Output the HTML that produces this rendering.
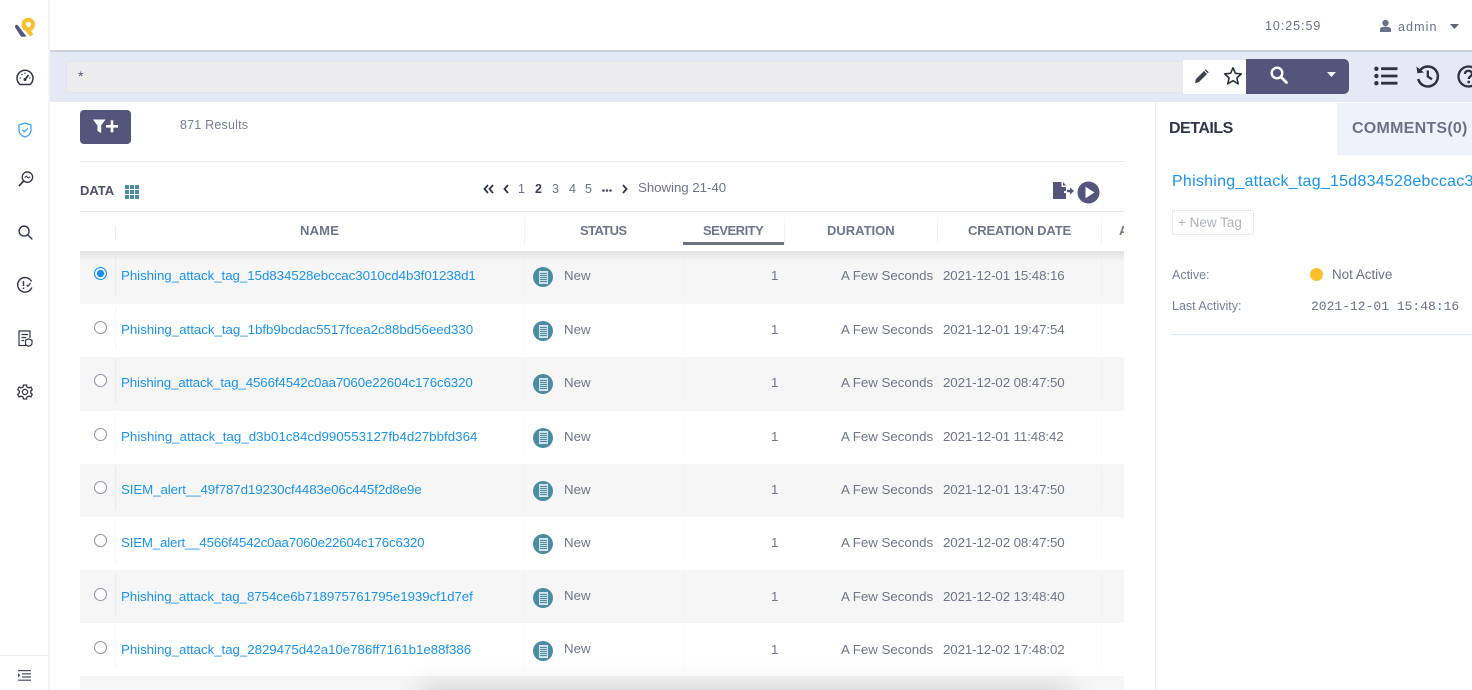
<!DOCTYPE html>
<html lang="en"><head><meta charset="utf-8"><title>Incidents</title>
<style>
html,body{margin:0;padding:0;width:1472px;height:690px;overflow:hidden;background:#fff;font-family:"Liberation Sans",sans-serif;color:#6b7287}
#w{position:relative;width:1472px;height:690px;overflow:hidden;background:#fff;filter:blur(.3px)}
.a{position:absolute}
.t{position:absolute;white-space:nowrap;line-height:16px}
svg{position:absolute;overflow:visible}
.row{position:absolute;left:80px;width:1044px;height:53.2px}
.g{background:#f6f6f7}
.row .t{font-size:13.3px}
.sep{position:absolute;width:1px;top:2px;height:44px;background:rgba(0,0,0,.018)}
.sep.l{background:rgba(0,0,0,.04)}
.rad{position:absolute;left:13.500px;top:16px;width:11px;height:11px;border:1.300px solid #8f93a5;border-radius:50%;background:#fff}
.nm{left:41px;top:17px;color:#1a94f0}
.st{left:484px;top:17px;color:#70768a}
.sv{left:691px;top:17px;color:#70768a}
.du{left:761px;top:17px;color:#70768a;letter-spacing:-.02px}
.da{left:863px;top:17px;color:#70768a;letter-spacing:-.1px}
.ic{position:absolute;left:453px;top:16px;width:20px;height:20px;border-radius:50%;background:#4c8ca3}
.ic:after{content:"";position:absolute;left:5.500px;top:3.500px;width:9px;height:13px;background:repeating-linear-gradient(#c9dde4 0 1px,#4c8ca3 1px 2px);border:.8px solid #d7e6ec;box-sizing:border-box}
.r2 .t,.r2 .rad,.r2 .ic{margin-top:1px}
.r3 .t,.r3 .rad,.r3 .ic{margin-top:2px}
.r3 .st{margin-top:1px}
.th{position:absolute;top:223px;font-size:13px;font-weight:bold;color:#6f768b;line-height:16px;white-space:nowrap}
.pg{position:absolute;top:181px;font-size:12.500px;color:#6b7287;line-height:16px}
</style></head><body><div id="w">

<!-- main areas -->
<div class="a" style="left:50px;top:50px;width:1422px;height:2px;background:#c9cedd"></div>
<div class="a" style="left:50px;top:52px;width:1422px;height:50px;background:#e4e9f5"></div>
<div class="a" style="left:66px;top:61px;width:1117px;height:32px;background:#ececef;border-radius:4px 0 0 4px;box-sizing:border-box;border:1px solid #e3e4ea;border-right:0"></div>
<div class="t" style="left:78px;top:68px;font-size:14px;color:#555a78">*</div>
<div class="a" style="left:1183px;top:60px;width:63px;height:34px;background:#fff"></div>
<div class="a" style="left:1246px;top:59px;width:103px;height:35px;background:#53557a;border-radius:0 5px 5px 0"></div>

<!-- top bar -->
<div class="t" style="left:1265px;top:18px;font-size:12.500px;letter-spacing:.95px;color:#6b7287">10:25:59</div>
<svg style="left:1379px;top:19px" width="13" height="14" viewBox="0 0 13 14"><circle cx="6.500" cy="4" r="3.200" fill="#6b7287"/><path d="M1 13V10.500C1 8.500 3 7.800 6.500 7.800S12 8.500 12 10.500V13Z" fill="#6b7287"/></svg>
<div class="t" style="left:1398px;top:19px;font-size:12.500px;letter-spacing:1.100px;color:#6b7287">admin</div>
<svg style="left:1450px;top:24px" width="9" height="6"><path d="M0 0H9L4.500 5Z" fill="#5f6479"/></svg>

<!-- toolbar icons -->
<svg style="left:1194px;top:69px" width="15" height="15" viewBox="0 0 16 16"><path d="M1 15L2 10.800 10.700 2.100 13.900 5.300 5.200 14Z" fill="#3d4052"/><path d="M11.500 1.300L12.600 .3 15.700 3.400 14.700 4.500Z" fill="#3d4052"/></svg>
<svg style="left:1223px;top:66px" width="20" height="20" viewBox="0 0 20 20"><path d="M10 1.800L12.400 7.300 18.400 7.900 13.900 11.900 15.200 17.800 10 14.700 4.800 17.800 6.100 11.900 1.600 7.900 7.600 7.300Z" fill="none" stroke="#30333f" stroke-width="1.600" stroke-linejoin="round"/></svg>
<svg style="left:1270px;top:66px" width="18" height="18" viewBox="0 0 18 18"><circle cx="7" cy="7" r="5.300" fill="none" stroke="#fff" stroke-width="2.400"/><path d="M11 11L16.500 16.500" stroke="#fff" stroke-width="2.800" stroke-linecap="round"/></svg>
<svg style="left:1327px;top:72px" width="9" height="5"><path d="M0 0H9L4.500 5Z" fill="#fff"/></svg>
<svg style="left:1374px;top:66px" width="24" height="20" viewBox="0 0 24 20" fill="#2f3240"><circle cx="2.400" cy="2.800" r="2.200"/><circle cx="2.400" cy="10" r="2.200"/><circle cx="2.400" cy="17.200" r="2.200"/><rect x="7" y="1.300" width="16.500" height="2.800" rx=".6"/><rect x="7" y="8.600" width="16.500" height="2.800" rx=".6"/><rect x="7" y="15.800" width="16.500" height="2.800" rx=".6"/></svg>
<svg style="left:1415px;top:64px" width="24" height="24" viewBox="0 0 24 24" fill="none" stroke="#2f3240" stroke-width="2.500"><path d="M5 6.300A10 10 0 1 1 3.200 15"/><path d="M1.500 2.500L2.300 9.300 9 8.500Z" fill="#2f3240" stroke="none"/><path d="M12.800 6.500V12.500L17 15.300" stroke-width="2.300"/></svg>
<svg style="left:1457px;top:65px" width="24" height="24" viewBox="0 0 24 24" fill="none" stroke="#2f3240" stroke-width="2.300"><circle cx="11.500" cy="11.500" r="10"/><path d="M8 9C8 6.700 9.800 5.800 11.500 5.800S15 7 15 9C15 11.300 11.700 11.300 11.700 14"/><circle cx="11.700" cy="17" r="1.400" fill="#2f3240" stroke="none"/></svg>

<!-- filter row -->
<div class="a" style="left:80px;top:110px;width:51px;height:34px;background:#53557a;border-radius:4px"></div>
<svg style="left:93px;top:119px" width="26" height="15" viewBox="0 0 26 15" fill="#fff"><path d="M0 .5H12.500L8.200 6.500V14L4.500 12V6.500Z"/><rect x="13" y="6" width="12" height="2.600"/><rect x="17.700" y="1.300" width="2.600" height="12"/></svg>
<div class="t" style="left:180px;top:117px;font-size:12.500px;letter-spacing:.2px;color:#7a8097">871 Results</div>
<div class="a" style="left:80px;top:161px;width:1044px;height:1px;background:#e8e8ea"></div>

<div class="t" style="left:80px;top:183px;font-size:13px;font-weight:bold;color:#4d5068">DATA</div>
<svg style="left:125px;top:185px" width="14" height="14" viewBox="0 0 14 14" fill="#4c8ca3"><rect x="0" y="0" width="4" height="4"/><rect x="5" y="0" width="4" height="4"/><rect x="10" y="0" width="4" height="4"/><rect x="0" y="5" width="4" height="4"/><rect x="5" y="5" width="4" height="4"/><rect x="10" y="5" width="4" height="4"/><rect x="0" y="10" width="4" height="4"/><rect x="5" y="10" width="4" height="4"/><rect x="10" y="10" width="4" height="4"/></svg>

<!-- pagination -->
<svg style="left:483px;top:184px" width="11" height="10" fill="none" stroke="#33364a" stroke-width="1.800"><path d="M5 1L1.500 5 5 9M10 1L6.500 5 10 9"/></svg>
<svg style="left:503px;top:184px" width="6" height="10" fill="none" stroke="#33364a" stroke-width="1.800"><path d="M5 1L1.500 5 5 9"/></svg>
<div class="pg" style="left:518px">1</div>
<div class="pg" style="left:535px;font-weight:bold;color:#3a3d52">2</div>
<div class="pg" style="left:552px">3</div>
<div class="pg" style="left:569px">4</div>
<div class="pg" style="left:585px">5</div>
<svg style="left:602px;top:189px" width="10" height="3" fill="#4a4e63"><circle cx="1.500" cy="1.500" r="1.300"/><circle cx="5" cy="1.500" r="1.300"/><circle cx="8.500" cy="1.500" r="1.300"/></svg>
<svg style="left:622px;top:184px" width="6" height="10" fill="none" stroke="#33364a" stroke-width="1.800"><path d="M1 1L4.500 5 1 9"/></svg>
<div class="t" style="left:638px;top:180px;font-size:13.300px;color:#70768a;letter-spacing:-.05px">Showing 21-40</div>

<svg style="left:1053px;top:182px" width="21" height="18" viewBox="0 0 21 18" fill="#53557a"><path d="M0 0H8.500V5H13V7.500H0ZM10 0L13 3.500H10ZM0 7.500H13V9H0ZM0 9H11V11H0ZM0 11H13V17H0Z"/><path d="M14 7.800H17V5.500L21 9 17 12.500V10.200H14Z"/></svg>
<svg style="left:1077px;top:181px" width="23" height="23" viewBox="0 0 23 23"><circle cx="11.500" cy="11.500" r="11" fill="#53557a"/><path d="M8.500 5.800V17.200L17.500 11.500Z" fill="#fff"/></svg>

<div class="a" style="left:80px;top:211px;width:1044px;height:1px;background:#e6e6e9"></div>

<!-- table header -->
<div class="a" style="left:115px;top:226px;width:1px;height:14px;background:#eeeef0"></div>
<div class="th" style="left:300px;letter-spacing:.2px">NAME</div>
<div class="a" style="left:524px;top:217px;width:1px;height:28px;background:#f3f3f4"></div>
<div class="th" style="left:580px;letter-spacing:-.6px">STATUS</div>
<div class="a" style="left:683px;top:242px;width:101px;height:3px;background:#6b7280"></div>
<div class="th" style="left:703px;letter-spacing:-.5px">SEVERITY</div>
<div class="a" style="left:784px;top:217px;width:1px;height:28px;background:#f3f3f4"></div>
<div class="th" style="left:827px">DURATION</div>
<div class="a" style="left:937px;top:217px;width:1px;height:28px;background:#f3f3f4"></div>
<div class="th" style="left:968px;letter-spacing:-.15px">CREATION DATE</div>
<div class="a" style="left:1101px;top:217px;width:1px;height:28px;background:#f3f3f4"></div>
<div class="a" style="left:1119px;top:223px;width:5px;height:16px;overflow:hidden"><div class="th" style="left:0;top:0">A</div></div>

<!-- rows -->
<div class="row g" style="top:251px"><div class="rad" style="background:#1a8ff0;border-color:#1a8ff0;box-shadow:inset 0 0 0 1.800px #fff"></div><div class="sep l" style="left:35px"></div><div class="t nm" style="letter-spacing:-.045px">Phishing_attack_tag_15d834528ebccac3010cd4b3f01238d1</div><div class="sep" style="left:444px"></div><div class="ic"></div><div class="t st">New</div><div class="sep" style="left:603px"></div><div class="t sv">1</div><div class="t du">A Few Seconds</div><div class="t da">2021-12-01 15:48:16</div><div class="sep" style="left:1021px"></div></div>
<div class="row r2" style="top:304.200px"><div class="rad"></div><div class="sep l" style="left:35px"></div><div class="t nm" style="letter-spacing:-.025px">Phishing_attack_tag_1bfb9bcdac5517fcea2c88bd56eed330</div><div class="sep" style="left:444px"></div><div class="ic"></div><div class="t st">New</div><div class="sep" style="left:603px"></div><div class="t sv">1</div><div class="t du">A Few Seconds</div><div class="t da">2021-12-01 19:47:54</div><div class="sep" style="left:1021px"></div></div>
<div class="row g r2" style="top:357.400px"><div class="rad"></div><div class="sep l" style="left:35px"></div><div class="t nm" style="letter-spacing:-.12px">Phishing_attack_tag_4566f4542c0aa7060e22604c176c6320</div><div class="sep" style="left:444px"></div><div class="ic"></div><div class="t st">New</div><div class="sep" style="left:603px"></div><div class="t sv">1</div><div class="t du">A Few Seconds</div><div class="t da">2021-12-02 08:47:50</div><div class="sep" style="left:1021px"></div></div>
<div class="row r2" style="top:410.600px"><div class="rad"></div><div class="sep l" style="left:35px"></div><div class="t nm" style="letter-spacing:.03px">Phishing_attack_tag_d3b01c84cd990553127fb4d27bbfd364</div><div class="sep" style="left:444px"></div><div class="ic"></div><div class="t st">New</div><div class="sep" style="left:603px"></div><div class="t sv">1</div><div class="t du">A Few Seconds</div><div class="t da">2021-12-01 11:48:42</div><div class="sep" style="left:1021px"></div></div>
<div class="row g r2" style="top:463.800px"><div class="rad"></div><div class="sep l" style="left:35px"></div><div class="t nm" style="letter-spacing:-.09px">SIEM_alert__49f787d19230cf4483e06c445f2d8e9e</div><div class="sep" style="left:444px"></div><div class="ic"></div><div class="t st">New</div><div class="sep" style="left:603px"></div><div class="t sv">1</div><div class="t du">A Few Seconds</div><div class="t da">2021-12-01 13:47:50</div><div class="sep" style="left:1021px"></div></div>
<div class="row r2" style="top:517px"><div class="rad"></div><div class="sep l" style="left:35px"></div><div class="t nm" style="letter-spacing:-.18px">SIEM_alert__4566f4542c0aa7060e22604c176c6320</div><div class="sep" style="left:444px"></div><div class="ic"></div><div class="t st">New</div><div class="sep" style="left:603px"></div><div class="t sv">1</div><div class="t du">A Few Seconds</div><div class="t da">2021-12-02 08:47:50</div><div class="sep" style="left:1021px"></div></div>
<div class="row g r3" style="top:570.200px"><div class="rad"></div><div class="sep l" style="left:35px"></div><div class="t nm" style="letter-spacing:-.06px">Phishing_attack_tag_8754ce6b718975761795e1939cf1d7ef</div><div class="sep" style="left:444px"></div><div class="ic"></div><div class="t st">New</div><div class="sep" style="left:603px"></div><div class="t sv">1</div><div class="t du">A Few Seconds</div><div class="t da">2021-12-02 13:48:40</div><div class="sep" style="left:1021px"></div></div>
<div class="row r3" style="top:623.400px"><div class="rad"></div><div class="sep l" style="left:35px"></div><div class="t nm" style="letter-spacing:-.045px">Phishing_attack_tag_2829475d42a10e786ff7161b1e88f386</div><div class="sep" style="left:444px"></div><div class="ic"></div><div class="t st">New</div><div class="sep" style="left:603px"></div><div class="t sv">1</div><div class="t du">A Few Seconds</div><div class="t da">2021-12-02 17:48:02</div><div class="sep" style="left:1021px"></div></div>
<div class="a g" style="left:80px;top:676px;width:1044px;height:14px"></div>

<!-- header shadow over first row -->
<div class="a" style="left:80px;top:251px;width:1044px;height:11px;background:linear-gradient(#e3e3e6,rgba(246,246,247,0))"></div>
<!-- bottom shadow -->
<div class="a" style="left:425px;top:694px;width:640px;height:14px;box-shadow:0 0 28px 6px rgba(0,0,0,.17)"></div>

<!-- details panel -->
<div class="a" style="left:1124px;top:102px;width:31px;height:588px;background:#fff"></div>
<div class="a" style="left:1155px;top:102px;width:317px;height:588px;background:#fff;border-left:1.500px solid #e9eef9;box-sizing:border-box"></div>
<div class="a" style="left:1337px;top:103px;width:135px;height:52px;background:#eef3fb"></div>
<div class="t" style="left:1169px;top:121px;font-size:16px;font-weight:bold;color:#333648;letter-spacing:-.5px">DETAILS</div>
<div class="t" style="left:1352px;top:121px;font-size:16px;font-weight:bold;color:#6b7287;letter-spacing:.25px">COMMENTS(0)</div>
<div class="a" style="left:1172px;top:155px;width:300px;height:60px;overflow:hidden"><div class="t" style="left:0;top:19px;font-size:16px;color:#1a94f0;letter-spacing:.25px">Phishing_attack_tag_15d834528ebccac3010cd4b3f01238d1</div></div>
<div class="a" style="left:1172px;top:210px;width:82px;height:25px;box-sizing:border-box;border:1px dotted #d5d7dd;border-radius:2px"></div>
<div class="t" style="left:1178px;top:215px;font-size:13.500px;color:#b0b4c0">+ New Tag</div>
<div class="t" style="left:1172px;top:267px;font-size:12.500px;color:#7a8097">Active:</div>
<div class="a" style="left:1310px;top:268px;width:13px;height:13px;border-radius:50%;background:#fbc02d"></div>
<div class="t" style="left:1332px;top:267px;font-size:13.400px;color:#6b7287">Not Active</div>
<div class="t" style="left:1172px;top:298px;font-size:12.500px;color:#7a8097">Last Activity:</div>
<div class="t" style="left:1311px;top:299px;font-size:13px;font-family:'Liberation Mono',monospace;color:#6b7287">2021-12-01 15:48:16</div>
<div class="a" style="left:1172px;top:334px;width:300px;height:1px;background:#dbe6f6"></div>

<!-- sidebar -->
<div class="a" style="left:0;top:0;width:50px;height:690px;background:#fff;border-right:2px solid #f4f4f6;box-sizing:border-box"></div>
<div class="a" style="left:0;top:655px;width:49px;height:1px;background:#eeeef0"></div>
<svg style="left:14px;top:17px" width="22" height="21" viewBox="0 0 22 21"><path d="M1.300 8.500C1.800 7.500 3 7.500 3.800 8.300L12.500 19.500 8.500 19.800C7.800 19.800 7 19.300 6.500 18.700L1.500 11C1 10.300 1 9.300 1.300 8.500Z" fill="#53557a"/><circle cx="14.300" cy="7.600" r="4.800" fill="none" stroke="#fbc02d" stroke-width="4"/><path d="M9.500 8L17.800 18.300" stroke="#fbc02d" stroke-width="4.200"/></svg>
<svg style="left:16px;top:69px" width="18" height="17" viewBox="0 0 18 17" fill="none" stroke="#33364a" stroke-width="1.500"><path d="M4 15.500A8 8 0 1 1 14 15.500Z"/><path d="M9 10.500L12.500 6" stroke-width="1.700"/><circle cx="9" cy="10.500" r="1.500" fill="#33364a" stroke="none"/><path d="M3.500 9H5M13 9H14.500M5.500 5L6.500 6M9 3.500V5" stroke-width="1.100"/></svg>
<svg style="left:18px;top:122px" width="14" height="16" viewBox="0 0 14 16" fill="none" stroke="#3ba0f7" stroke-width="1.250"><path d="M7 1L13 3V8C13 11.500 10.500 14 7 15 3.500 14 1 11.500 1 8V3Z"/><path d="M4.300 7.800L6.300 9.800 9.800 6.300"/></svg>
<svg style="left:18px;top:171px" width="16" height="16" viewBox="0 0 17 17" fill="none" stroke="#33364a" stroke-width="1.400"><circle cx="10" cy="6.500" r="5.500"/><path d="M6 10.500L1 16" stroke-width="1.800"/><path d="M7 7L9 5.500 11 7.500 13 6" stroke-width="1.100"/></svg>
<svg style="left:18px;top:225px" width="15" height="15" viewBox="0 0 16 16" fill="none" stroke="#33364a" stroke-width="1.500"><circle cx="6.500" cy="6.500" r="5.300"/><path d="M10.500 10.500L15.300 15.300"/></svg>
<svg style="left:17px;top:277px" width="16" height="16" viewBox="0 0 16 16" fill="none" stroke="#33364a" stroke-width="1.400"><path d="M14.500 4.500A7.300 7.300 0 1 0 14.800 10.500"/><path d="M6.500 4V9M6.500 10.500V12" stroke-width="1.500"/><path d="M9.700 7.700L11 9.300 13.500 6" stroke-width="1.200"/></svg>
<svg style="left:18px;top:330px" width="15" height="17" viewBox="0 0 15 17" fill="none" stroke="#33364a" stroke-width="1.200"><path d="M8 15.500H1V1H12V8"/><path d="M3.500 4.500H10M3.500 7.500H8M3.500 10.500H6"/><path d="M10.500 9L14 10.200V13C14 14.500 12.500 15.800 10.500 16.300 8.500 15.800 7.500 14.500 7.500 13V10.200Z"/></svg>
<svg style="left:17px;top:384px" width="16" height="16" viewBox="0 0 16 16" fill="none" stroke="#33364a" stroke-width="1.300"><path d="M6.500 1H9.500L10 3 12 3.900 13.900 3 15.200 5.600 13.700 7 13.700 9 15.200 10.400 13.900 13 12 12.100 10 13 9.500 15H6.500L6 13 4 12.100 2.100 13 .8 10.400 2.300 9V7L.8 5.600 2.100 3 4 3.900 6 3Z"/><circle cx="8" cy="8" r="2.600"/></svg>
<svg style="left:18px;top:670px" width="13" height="11" viewBox="0 0 13 11" fill="#4a4d5f"><rect x="0" y="0" width="13" height="1.200"/><rect x="4" y="3.200" width="9" height="1.200"/><rect x="4" y="6.400" width="9" height="1.200"/><rect x="0" y="9.600" width="13" height="1.200"/><path d="M0 3.200L2.600 5.200 0 7.200Z"/></svg>

</div></body></html>
